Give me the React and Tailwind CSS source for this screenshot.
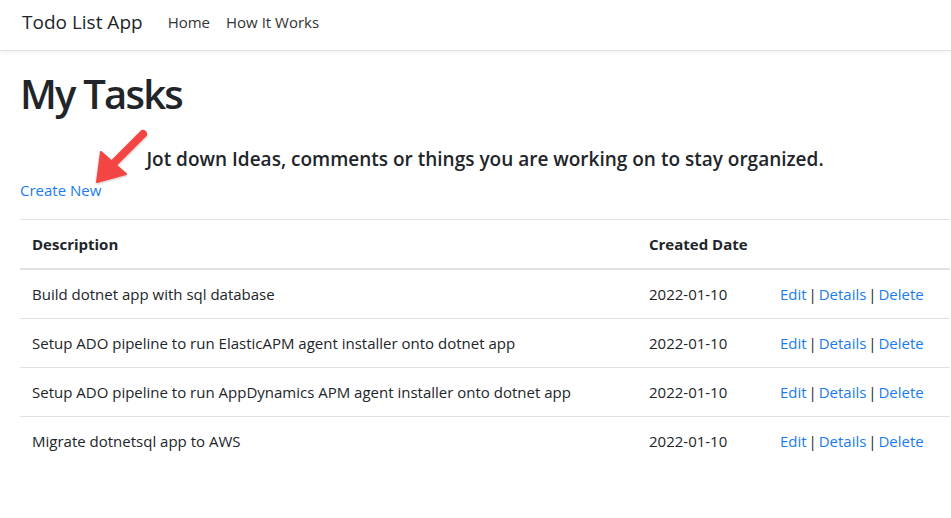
import React from "react";

const rows = [
  "Build dotnet app with sql database",
  "Setup ADO pipeline to run ElasticAPM agent installer onto dotnet app",
  "Setup ADO pipeline to run AppDynamics APM agent installer onto dotnet app",
  "Migrate dotnetsql app to AWS",
];

function Arrow() {
  return (
    <svg className="absolute left-[86px] top-[120px]" width="70" height="72" viewBox="86 120 70 72">
      <defs>
        <filter id="sh" x="-20%" y="-20%" width="140%" height="140%">
          <feDropShadow dx="0" dy="1" stdDeviation="1" floodColor="#000" floodOpacity="0.25" />
        </filter>
      </defs>
      <g filter="url(#sh)" fill="#f44545" stroke="#f44545">
        <line x1="143" y1="134" x2="113" y2="164" strokeWidth="8" strokeLinecap="round" />
        <polygon points="97,182 101,152 126,174" strokeWidth="2" strokeLinejoin="round" />
      </g>
    </svg>
  );
}

export default function App() {
  return (
    <div className="relative min-h-[518px] bg-white text-[#212529] font-['Open_Sans',sans-serif] overflow-hidden">
      <nav className="h-[51px] border-b border-[#e0e0e0] shadow-[0_2px_6px_rgba(0,0,0,0.05)] flex items-center pl-[22px] pb-[5px]">
        <span className="text-[19px] mr-[17px] leading-none">Todo List App</span>
        <span className="text-[15px] text-[#333] px-2 leading-none">Home</span>
        <span className="text-[15px] text-[#333] px-2 leading-none">How It Works</span>
      </nav>
      <main className="pl-[20px] w-[950px]">
        <h1 className="text-[40px] font-semibold leading-[48px] mt-[19px] tracking-[-1.8px]">My Tasks</h1>
        <p className="text-[19px] font-semibold text-center mt-[30px] leading-[23px]">
          Jot down Ideas, comments or things you are working on to stay organized.
        </p>
        <a className="block text-[15px] text-[#1a7cf0] mt-[10px] leading-[18px]">Create New</a>
        <table className="w-full mt-[20px] text-[15px] border-collapse">
          <thead>
            <tr className="border-t border-[#dee2e6] border-b-2">
              <th className="text-left font-bold px-3 h-[49px] w-[617px]">Description</th>
              <th className="text-left font-bold px-3 w-[131px]">Created Date</th>
              <th className="px-3"></th>
            </tr>
          </thead>
          <tbody>
            {rows.map((r, i) => (
              <tr key={i} className={i > 0 ? "border-t border-[#dee2e6]" : ""}>
                <td className={(i === 0 ? "h-[50px] pt-[1px] " : "h-[49px] ") + "px-3 whitespace-nowrap"}>{r}</td>
                <td className="px-3">2022-01-10</td>
                <td className="px-3 whitespace-nowrap [word-spacing:-2px]">
                  <a className="text-[#1a7cf0]">Edit</a> | <a className="text-[#1a7cf0]">Details</a> |{" "}
                  <a className="text-[#1a7cf0]">Delete</a>
                </td>
              </tr>
            ))}
          </tbody>
        </table>
      </main>
      <Arrow />
    </div>
  );
}
